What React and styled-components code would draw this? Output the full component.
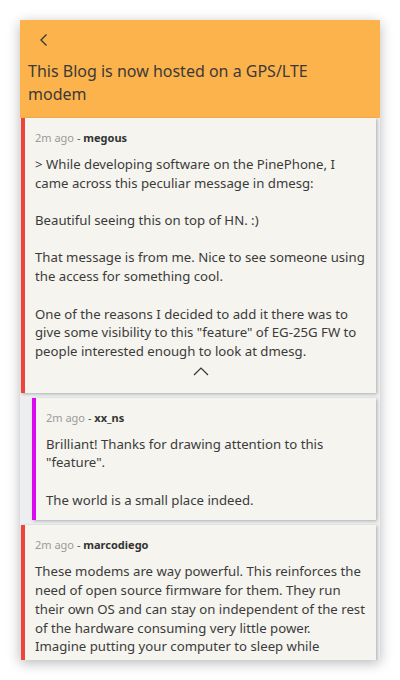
import React from "react";
import styled, { createGlobalStyle } from "styled-components";

const GlobalStyle = createGlobalStyle`
  body {
    margin: 0;
    background: #ffffff;
    font-family: "Noto Sans", "Open Sans", sans-serif;
  }
`;

const comments = [
  {
    id: 1,
    depth: 0,
    color: "#f0433a",
    age: "2m ago",
    user: "megous",
    collapsible: true,
    paragraphs: [
      "> While developing software on the PinePhone, I came across this peculiar message in dmesg:",
      "Beautiful seeing this on top of HN. :)",
      "That message is from me. Nice to see someone using the access for something cool.",
      'One of the reasons I decided to add it there was to give some visibility to this "feature" of EG-25G FW to people interested enough to look at dmesg.',
    ],
  },
  {
    id: 2,
    depth: 1,
    color: "#d909f0",
    age: "2m ago",
    user: "xx_ns",
    paragraphs: [
      'Brilliant! Thanks for drawing attention to this "feature".',
      "The world is a small place indeed.",
    ],
  },
  {
    id: 3,
    depth: 0,
    color: "#f0433a",
    age: "2m ago",
    user: "marcodiego",
    paragraphs: [
      "These modems are way powerful. This reinforces the need of open source firmware for them. They run their own OS and can stay on independent of the rest of the hardware consuming very little power.\nImagine putting your computer to sleep while",
    ],
  },
];

const Page = styled.div`
  padding: 20px;
`;

const Phone = styled.div`
  width: 360px;
  height: 640px;
  display: flex;
  flex-direction: column;
  overflow: hidden;
  background: #eceef0;
  box-shadow: 0 3px 12px rgba(0, 0, 0, 0.28);
`;

const Header = styled.header`
  background: #fdb34b;
  color: #3a3a3a;
  flex-shrink: 0;
`;

const Toolbar = styled.div`
  height: 40px;
  display: flex;
  align-items: center;
  padding-left: 12px;
`;

const BackButton = styled.button`
  width: 24px;
  height: 24px;
  padding: 0;
  border: none;
  background: none;
  display: flex;
  align-items: center;
  justify-content: center;
`;

const Title = styled.h1`
  margin: 0;
  padding: 0 30px 12px 8px;
  font-size: 16px;
  line-height: 23px;
  font-weight: 400;
`;

const List = styled.div`
  flex: 1;
  padding: 0 4px 0 1px;
`;

const Card = styled.div`
  margin-left: ${(p) => p.$depth * 11}px;
  margin-bottom: 5px;
  padding: 12px 10px 11px 10px;
  background: #f5f4ee;
  border-left: 4px solid ${(p) => p.$color};
  box-shadow: 1px 1px 3px rgba(0, 0, 0, 0.28);
  color: #3b3b3b;
`;

const Meta = styled.div`
  font-size: 11px;
  line-height: 15px;
  margin-bottom: 10px;
  color: #555;
`;

const Age = styled.span`
  color: #9b9b9b;
`;

const User = styled.span`
  font-weight: 700;
  color: #333;
`;

const Body = styled.div`
  font-size: 13.2px;
  line-height: 18.7px;
  white-space: pre-line;

  p {
    margin: 0 0 18.7px;
  }
  p:last-child {
    margin-bottom: 0;
  }
`;

const CollapseRow = styled.div`
  height: 22px;
  display: flex;
  align-items: center;
  justify-content: center;
  margin-bottom: -1px;
`;

const Chevron = ({ dir }) =>
  dir === "left" ? (
    <svg width="10" height="14" viewBox="0 0 10 14">
      <polyline points="7.5,1.5 2,7 7.5,12.5" fill="none" stroke="#333" strokeWidth="1.3" />
    </svg>
  ) : (
    <svg width="16" height="9" viewBox="0 0 16 9">
      <polyline points="1,8 8,1 15,8" fill="none" stroke="#333" strokeWidth="1.2" />
    </svg>
  );

const Comment = ({ c }) => (
  <Card $depth={c.depth} $color={c.color}>
    <Meta>
      <Age>{c.age}</Age> - <User>{c.user}</User>
    </Meta>
    <Body>
      {c.paragraphs.map((t, i) => (
        <p key={i}>{t}</p>
      ))}
    </Body>
    {c.collapsible && (
      <CollapseRow>
        <Chevron dir="up" />
      </CollapseRow>
    )}
  </Card>
);

export default function App() {
  return (
    <Page>
      <GlobalStyle />
      <Phone>
        <Header>
          <Toolbar>
            <BackButton>
              <Chevron dir="left" />
            </BackButton>
          </Toolbar>
          <Title>This Blog is now hosted on a GPS/LTE modem</Title>
        </Header>
        <List>
          {comments.map((c) => (
            <Comment key={c.id} c={c} />
          ))}
        </List>
      </Phone>
    </Page>
  );
}
